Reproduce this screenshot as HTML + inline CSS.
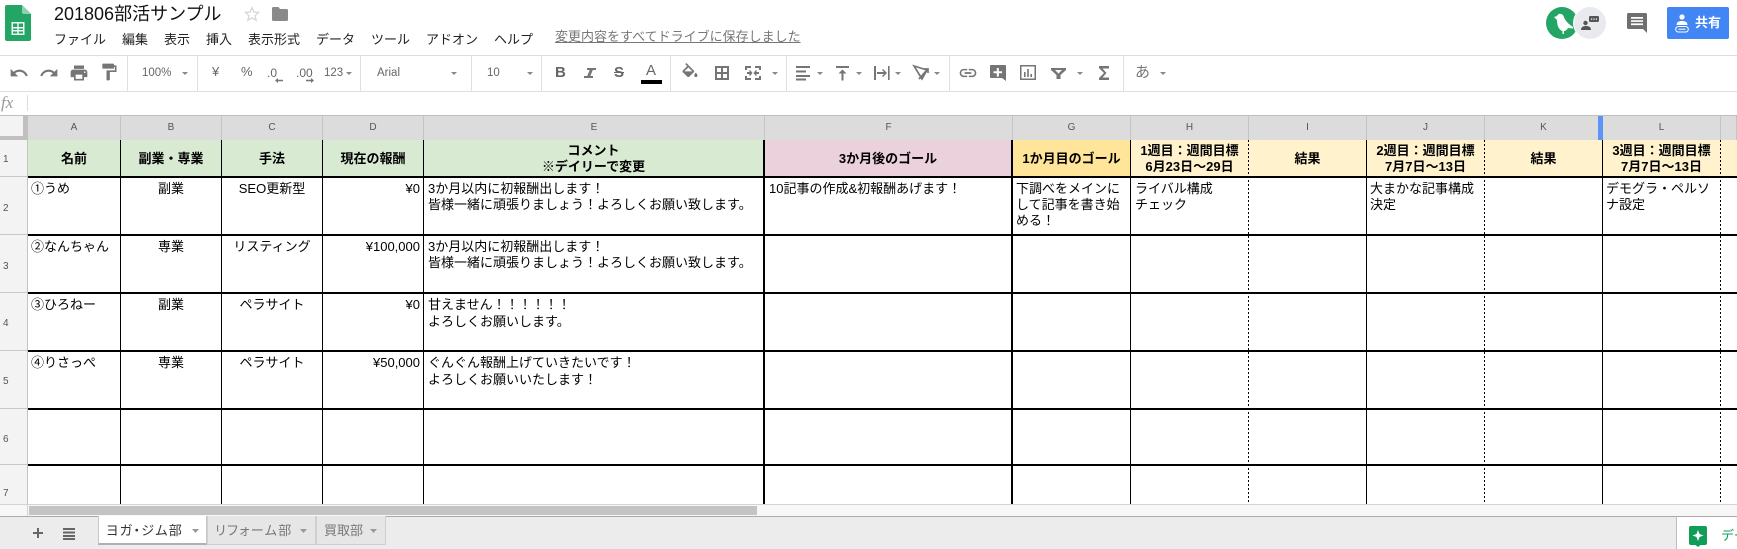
<!DOCTYPE html>
<html lang="ja"><head><meta charset="utf-8"><title>201806部活サンプル</title>
<style>
html,body{margin:0;padding:0;background:#fff}
#p{position:relative;width:1737px;height:549px;overflow:hidden;background:#fff;font-family:"Liberation Sans","Noto Sans CJK JP",sans-serif;font-size:13px;color:#000}
#p div{position:absolute}
.t{white-space:nowrap;line-height:16px;height:16px}
.c{text-align:center}
.r{text-align:right}
.b{font-weight:bold}
.n{font-feature-settings:"palt"}
.h{height:24px;top:116px;line-height:23px;font-size:10px;color:#555;text-align:center;background:#dcdcdc;border-right:1px solid #c4c4c4;box-sizing:border-box}
.rn{left:0;width:27px;background:#f3f3f3;border-bottom:1px solid #c8c8c8;box-sizing:border-box;font-size:10px;color:#555;padding-left:3px}
.v{top:140px;height:364px;width:1px;background:#000}
.vt{width:2px}
.d{background:repeating-linear-gradient(#000 0 2px,transparent 2px 4px)}
.l{left:28px;width:1709px;height:2px;background:#000}
.s{top:56px;width:1px;height:35px;background:#e0e0e0}
.m{top:32px;color:#222}
.g{color:#757575}
.tb{font-size:11.5px;color:#666;top:65px}
</style></head><body><div id="p">

<svg style="position:absolute;left:5px;top:5px" width="26" height="36" viewBox="0 0 26 36"><path d="M2 0H17L26 9V34a2 2 0 0 1-2 2H2a2 2 0 0 1-2-2V2a2 2 0 0 1 2-2z" fill="#23a566"/><path d="M17 0L26 9H19a2 2 0 0 1-2-2z" fill="#8ed1b1"/><path d="M6.500 17H19.500V30H6.500zM8 18.500V22H12.300V18.500zM13.700 18.500V22H18V18.500zM8 23.500V25H12.300V23.500zM13.700 23.500V25H18V23.500zM8 26.500V28.500H12.300V26.500zM13.700 26.500V28.500H18V26.500z" fill="#f1f8f4" fill-rule="evenodd"/></svg>

<div class="t" style="left:54px;top:2px;font-size:18px;line-height:24px;height:24px;color:#111">201806部活サンプル</div>
<svg style="position:absolute;left:244px;top:6px" width="16" height="16" viewBox="0 0 16 16"><path d="M8 1.500l1.900 4.500 4.800.4-3.600 3.200 1.100 4.700L8 11.800l-4.200 2.500 1.100-4.700L1.300 6.400 6.100 6z" fill="none" stroke="#d5d5d5" stroke-width="1.200"/></svg>
<svg style="position:absolute;left:272px;top:7px" width="16" height="14" viewBox="0 0 16 14"><path d="M1.500 0H6.500L8 2H14.500A1.500 1.500 0 0 1 16 3.500V12.500A1.500 1.500 0 0 1 14.500 14H1.500A1.500 1.500 0 0 1 0 12.500V1.500A1.500 1.500 0 0 1 1.500 0z" fill="#8a8a8a"/></svg>

<div class="t m" style="left:54px">ファイル</div>
<div class="t m" style="left:122px">編集</div>
<div class="t m" style="left:164px">表示</div>
<div class="t m" style="left:206px">挿入</div>
<div class="t m" style="left:248px">表示形式</div>
<div class="t m" style="left:316px">データ</div>
<div class="t m" style="left:371px">ツール</div>
<div class="t m" style="left:426px">アドオン</div>
<div class="t m" style="left:494px">ヘルプ</div>
<div class="t" style="left:555px;top:29px;color:#777;text-decoration:underline">変更内容をすべてドライブに保存しました</div>

<svg style="position:absolute;left:1546px;top:7px" width="62" height="33" viewBox="0 0 62 33"><circle cx="16" cy="16" r="16" fill="#23a566"/><path d="M8 10L11 9C12 6 16 6 17.500 9C19 13 21 16 27 20L27 21.500L22 21C21 23 19 24 18 24L18 27L16.500 27L16.500 24C13 23 11 19 11 13Z" fill="#fff"/><circle cx="44" cy="16" r="17" fill="#fff"/><circle cx="44" cy="16" r="16" fill="#e9eaed"/><circle cx="39.500" cy="16" r="2.200" fill="#555"/><path d="M35 23c0-3 2-4 5-4s5 1 5 4z" fill="#555"/><rect x="43" y="9" width="10" height="6" rx="1.200" fill="#555"/><path d="M45 11.500h1.200v1.200H45zM47.400 11.500h1.200v1.200h-1.200zM49.800 11.500H51v1.200h-1.200z" fill="#fff"/></svg>
<svg style="position:absolute;left:1627px;top:13px" width="20" height="20" viewBox="0 0 20 20"><path d="M1.500 0h17A1.500 1.500 0 0 1 20 1.500V20l-4-4H1.500A1.500 1.500 0 0 1 0 14.500V1.500A1.500 1.500 0 0 1 1.500 0z" fill="#6f6f6f"/><path d="M4 4h12v1.700H4zM4 7.200h12v1.700H4zM4 10.400h12v1.700H4z" fill="#fff"/></svg>
<div style="left:1667px;top:7px;width:62px;height:32px;background:#4285f4;border-radius:2px"></div>
<svg style="position:absolute;left:1675px;top:14px" width="14" height="19" viewBox="0 0 14 19"><circle cx="7" cy="3" r="2.600" fill="#fff"/><path d="M1.500 11c0-3 2.500-4 5.500-4s5.500 1 5.500 4z" fill="#fff"/><rect x=".7" y="12.500" width="12.600" height="5.500" rx="2.700" fill="none" stroke="#fff"/><path d="M3.500 15.200h7" stroke="#fff"/></svg>
<div class="t b" style="left:1695px;top:15px;color:#fff">共有</div>

<div style="left:0;top:55px;width:1737px;height:1px;background:#dedede"></div>
<div style="left:0;top:91px;width:1737px;height:1px;background:#dedede"></div>
<div class="s" style="left:127px"></div><div class="s" style="left:197px"></div><div class="s" style="left:360px"></div><div class="s" style="left:471px"></div><div class="s" style="left:541px"></div><div class="s" style="left:670px"></div><div class="s" style="left:786px"></div><div class="s" style="left:949px"></div><div class="s" style="left:1123px"></div>

<svg style="position:absolute;left:0;top:56px" width="1200" height="36" fill="#757575">
<svg x="9" y="7" width="20" height="20" viewBox="0 0 24 24"><path d="M12.500 8c-2.650 0-5.050.99-6.900 2.600L2 7v9h9l-3.620-3.620c1.390-1.160 3.160-1.880 5.120-1.880 3.540 0 6.550 2.310 7.600 5.500l2.370-.78C21.080 11.030 17.150 8 12.500 8z"/></svg>
<svg x="39" y="7" width="20" height="20" viewBox="0 0 24 24"><path d="M18.400 10.600C16.550 8.990 14.150 8 11.500 8c-4.650 0-8.580 3.030-9.960 7.220L3.900 16c1.050-3.190 4.050-5.500 7.600-5.500 1.950 0 3.730.72 5.120 1.880L13 16h9V7l-3.600 3.600z"/></svg>
<svg x="69" y="7" width="20" height="20" viewBox="0 0 24 24"><path d="M19 8H5c-1.660 0-3 1.340-3 3v6h4v4h12v-4h4v-6c0-1.660-1.340-3-3-3zm-3 11H8v-5h8v5zm3-7c-.55 0-1-.45-1-1s.45-1 1-1 1 .45 1 1-.45 1-1 1zm-1-9H6v4h12V3z"/></svg>
<svg x="99" y="6" width="20" height="20" viewBox="0 0 24 24"><path d="M18 4V3c0-.55-.45-1-1-1H5c-.55 0-1 .45-1 1v4c0 .55.45 1 1 1h12c.55 0 1-.45 1-1V6h1v4H9v11c0 .55.45 1 1 1h2c.55 0 1-.45 1-1v-9h8V4h-3z"/></svg>
<g fill="#888"><path d="M182 16h6l-3 3zM346 16h6l-3 3zM451 16h6l-3 3zM527 16h6l-3 3zM772 16h6l-3 3zM817 16h6l-3 3zM856 16h6l-3 3zM895 16h6l-3 3zM934 16h6l-3 3zM1077 16h6l-3 3zM1160 16h6l-3 3z"/></g>
<path d="M278 27l-3-2.500 3-2.500v1.700h5v1.600h-5zM311 22l3 2.500-3 2.500v-1.700h-5v-1.600h5z"/>
<path d="M587 12h9v2h-3.200l-2.500 6h2.700v2h-9v-2h3.200l2.500-6H587z"/>
<svg x="680" y="7" width="20" height="20" viewBox="0 0 24 24"><path d="M16.560 8.940L7.620 0 6.210 1.410l2.380 2.380-5.150 5.150c-.59.59-.59 1.540 0 2.120l5.500 5.500c.29.29.68.44 1.060.44s.77-.15 1.060-.44l5.500-5.500c.59-.58.59-1.530 0-2.120zM5.210 10L10 5.210 14.790 10H5.210zM19 11.500s-2 2.170-2 3.500c0 1.100.9 2 2 2s2-.9 2-2c0-1.330-2-3.500-2-3.500z"/></svg>
<path d="M715 10h14v14h-14zM717 12v4h4v-4zM723 12v4h4v-4zM717 18v4h4v-4zM723 18v4h4v-4z" fill-rule="evenodd"/>
<path d="M745 10h6v2h-4v2h-2zM755 10h6v4h-2v-2h-4zM745 20h2v2h4v2h-6zM759 20h2v4h-6v-2h4zM747 16h3l-1-1 1-1 2.500 3-2.500 3-1-1 1-1h-3zM759 16v2h-3l1 1-1 1-2.500-3 2.500-3 1 1-1 1z"/>
<path d="M796 10h14v2h-14zM796 14.500h10v2h-10zM796 19h14v2h-14zM796 22.500h10v2h-10z"/>
<path d="M836 10h13v2h-13zM842.500 13.500l4 4h-3v7h-2v-7h-3z"/>
<path d="M874 10h2v14h-2zM888 10h1.600v14H888zM877 16h7l-2-2 1-1 4 4-4 4-1-1 2-2h-7z"/>
<path d="M914 10l13 4-5 9z" fill="none" stroke="#757575" stroke-width="1.700"/><path d="M919 23l8-9M924 13h4v4" fill="none" stroke="#757575" stroke-width="1.700"/>
<svg x="958" y="7" width="20" height="20" viewBox="0 0 24 24"><path d="M3.900 12c0-1.710 1.390-3.100 3.100-3.100h4V7H7c-2.760 0-5 2.240-5 5s2.240 5 5 5h4v-1.900H7c-1.710 0-3.100-1.390-3.100-3.100zM8 13h8v-2H8v2zm9-6h-4v1.900h4c1.710 0 3.100 1.390 3.100 3.100s-1.390 3.100-3.100 3.100h-4V17h4c2.760 0 5-2.240 5-5s-2.240-5-5-5z"/></svg>
<path d="M991 9h14a1 1 0 0 1 1 1v15l-4-3h-11a1 1 0 0 1-1-1V10a1 1 0 0 1 1-1zM996.800 12v3.300h-3.300v2h3.300v3.300h2v-3.300h3.300v-2h-3.300V12z" fill-rule="evenodd"/>
<path d="M1020 9h16v15h-16zM1021.500 10.500v12h13v-12zM1024 16h1.600v5H1024zM1027.200 13h1.600v8h-1.600zM1030.400 18h1.600v3h-1.600z" fill-rule="evenodd"/>
<path d="M1051 12h15v2l-5.500 5v4h-4v-4l-5.500-5zm4 2l3.500 3.500 3.500-3.500z" fill-rule="evenodd"/>
<path d="M1099 10h10v2.500h-6.500l4 4.500-4 4.500h6.500V24h-10v-2l5-5-5-5z"/>
</svg>

<div class="t tb" style="left:142px;width:34px">100%</div>
<div class="t tb" style="left:212px;top:64px;font-size:13px">¥</div>
<div class="t tb" style="left:241px;top:64px;font-size:13px">%</div>
<div class="t tb" style="left:267px;top:65px;font-size:12px">.0</div>
<div class="t tb" style="left:296px;top:65px;font-size:12px">.00</div>
<div class="t tb" style="left:324px">123</div>
<div class="t tb" style="left:377px">Arial</div>
<div class="t tb" style="left:487px">10</div>
<div class="t tb g" style="left:555px;top:65px;font-size:15px;font-weight:bold">B</div>
<div class="t tb g" style="left:614px;top:65px;font-size:15px;font-weight:bold;text-decoration:line-through">S</div>
<div class="t tb g" style="left:646px;top:63px;font-size:15px">A</div>
<div style="left:641px;top:80px;width:21px;height:4px;background:#000"></div>
<div class="t g" style="left:1135px;top:65px;font-size:15px">あ</div>

<div class="t" style="left:1px;top:95px;font-family:'Liberation Serif',serif;font-style:italic;font-size:17px;color:#999">fx</div>
<div style="left:27px;top:95px;width:1px;height:16px;background:#ddd"></div>
<div style="left:0;top:115px;width:1737px;height:1px;background:#bdbdbd"></div>

<div style="left:0;top:116px;width:23px;height:24px;background:#f3f3f3"></div>
<div style="left:23px;top:116px;width:5px;height:28px;background:#c0c0c0"></div>
<div style="left:0;top:136px;width:28px;height:4px;background:#c0c0c0"></div>

<div class="h" style="left:28px;width:93px">A</div>
<div class="h" style="left:121px;width:101px">B</div>
<div class="h" style="left:222px;width:101px">C</div>
<div class="h" style="left:323px;width:101px">D</div>
<div class="h" style="left:424px;width:341px">E</div>
<div class="h" style="left:765px;width:248px">F</div>
<div class="h" style="left:1013px;width:118px">G</div>
<div class="h" style="left:1131px;width:118px">H</div>
<div class="h" style="left:1249px;width:118px">I</div>
<div class="h" style="left:1367px;width:118px">J</div>
<div class="h" style="left:1485px;width:118px">K</div>
<div class="h" style="left:1603px;width:118px">L</div>
<div class="h" style="left:1721px;width:16px"></div>
<div style="left:1598px;top:116px;width:5px;height:24px;background:#5a95f5"></div>

<div class="rn" style="top:140px;height:37px;line-height:40px">1</div>
<div class="rn" style="top:177px;height:58px;line-height:64px">2</div>
<div class="rn" style="top:235px;height:58px;line-height:64px">3</div>
<div class="rn" style="top:293px;height:58px;line-height:62px">4</div>
<div class="rn" style="top:351px;height:58px;line-height:62px">5</div>
<div class="rn" style="top:409px;height:56px;line-height:62px">6</div>
<div class="rn" style="top:465px;height:39px;line-height:58px;border:0">7</div>
<div style="left:27px;top:140px;width:1px;height:364px;background:#c4c4c4"></div>

<div style="left:28px;top:140px;width:735px;height:36px;background:#d9ead3"></div>
<div style="left:764px;top:140px;width:248px;height:36px;background:#ead1dc"></div>
<div style="left:1012px;top:140px;width:118px;height:36px;background:#ffe599"></div>
<div style="left:1130px;top:140px;width:607px;height:36px;background:#fff2cc"></div>

<div class="v" style="left:120px"></div><div class="v" style="left:221px"></div><div class="v" style="left:322px"></div><div class="v" style="left:423px"></div>
<div class="v vt" style="left:763px"></div><div class="v vt" style="left:1011px"></div>
<div class="v" style="left:1130px"></div><div class="v d" style="left:1248px"></div><div class="v" style="left:1366px"></div><div class="v d" style="left:1484px"></div><div class="v" style="left:1602px"></div><div class="v d" style="left:1720px"></div>
<div class="l" style="top:176px"></div><div class="l" style="top:234px"></div><div class="l" style="top:292px"></div><div class="l" style="top:350px"></div><div class="l" style="top:408px"></div><div class="l" style="top:464px"></div>

<div class="t c b" style="left:28px;width:92px;top:151px">名前</div>
<div class="t c b" style="left:121px;width:100px;top:151px">副業・専業</div>
<div class="t c b" style="left:222px;width:100px;top:151px">手法</div>
<div class="t c b" style="left:323px;width:100px;top:151px">現在の報酬</div>
<div class="t c b" style="left:424px;width:339px;top:143px">コメント</div>
<div class="t c b" style="left:424px;width:339px;top:159px">※デイリーで変更</div>
<div class="t c b" style="left:765px;width:246px;top:151px">3か月後のゴール</div>
<div class="t c b" style="left:1013px;width:117px;top:151px">1か月目のゴール</div>
<div class="t c b" style="left:1131px;width:117px;top:143px">1週目：週間目標</div>
<div class="t c b" style="left:1131px;width:117px;top:159px">6月23日～29日</div>
<div class="t c b" style="left:1249px;width:117px;top:151px">結果</div>
<div class="t c b" style="left:1367px;width:117px;top:143px">2週目：週間目標</div>
<div class="t c b" style="left:1367px;width:117px;top:159px">7月7日～13日</div>
<div class="t c b" style="left:1485px;width:117px;top:151px">結果</div>
<div class="t c b" style="left:1603px;width:117px;top:143px">3週目：週間目標</div>
<div class="t c b" style="left:1603px;width:117px;top:159px">7月7日～13日</div>

<div class="t" style="left:31px;top:181px">①うめ</div>
<div class="t c" style="left:121px;width:100px;top:181px">副業</div>
<div class="t c" style="left:222px;width:100px;top:181px">SEO更新型</div>
<div class="t r" style="left:323px;width:97px;top:181px">¥0</div>
<div class="t" style="left:428px;top:181px">3か月以内に初報酬出します！</div>
<div class="t" style="left:428px;top:197px">皆様一緒に頑張りましょう！よろしくお願い致します。</div>
<div class="t" style="left:769px;top:181px">10記事の作成&amp;初報酬あげます！</div>
<div class="t" style="left:1016px;top:181px">下調べをメインに</div>
<div class="t" style="left:1016px;top:197px">して記事を書き始</div>
<div class="t" style="left:1016px;top:213px">める！</div>
<div class="t" style="left:1135px;top:181px">ライバル構成</div>
<div class="t" style="left:1135px;top:197px">チェック</div>
<div class="t" style="left:1370px;top:181px">大まかな記事構成</div>
<div class="t" style="left:1370px;top:197px">決定</div>
<div class="t" style="left:1606px;top:181px">デモグラ・ペルソ</div>
<div class="t" style="left:1606px;top:197px">ナ設定</div>

<div class="t" style="left:31px;top:239px">②なんちゃん</div>
<div class="t c" style="left:121px;width:100px;top:239px">専業</div>
<div class="t c" style="left:222px;width:100px;top:239px">リスティング</div>
<div class="t r" style="left:323px;width:97px;top:239px">¥100,000</div>
<div class="t" style="left:428px;top:239px">3か月以内に初報酬出します！</div>
<div class="t" style="left:428px;top:255px">皆様一緒に頑張りましょう！よろしくお願い致します。</div>

<div class="t" style="left:31px;top:297px">③ひろねー</div>
<div class="t c" style="left:121px;width:100px;top:297px">副業</div>
<div class="t c" style="left:222px;width:100px;top:297px">ペラサイト</div>
<div class="t r" style="left:323px;width:97px;top:297px">¥0</div>
<div class="t" style="left:428px;top:297px">甘えません！！！！！！</div>
<div class="t" style="left:428px;top:314px">よろしくお願いします。</div>

<div class="t" style="left:31px;top:355px">④りさっぺ</div>
<div class="t c" style="left:121px;width:100px;top:355px">専業</div>
<div class="t c" style="left:222px;width:100px;top:355px">ペラサイト</div>
<div class="t r" style="left:323px;width:97px;top:355px">¥50,000</div>
<div class="t" style="left:428px;top:355px">ぐんぐん報酬上げていきたいです！</div>
<div class="t" style="left:428px;top:372px">よろしくお願いいたします！</div>

<div style="left:0;top:504px;width:1737px;height:12px;background:#f7f7f7;border-top:1px solid #d4d4d4;box-sizing:border-box"></div>
<div style="left:27px;top:504px;width:1px;height:12px;background:#d4d4d4"></div>
<div style="left:29px;top:506px;width:728px;height:9px;background:#c4c4c4"></div>
<div style="left:0;top:516px;width:1737px;height:33px;background:#ececec;border-top:1px solid #aaa;box-sizing:border-box"></div>

<svg style="position:absolute;left:30px;top:525px" width="50" height="16" fill="#666"><path d="M3 7h10v2H3zM7 3h2v10H7z"/><path d="M33 3h12v2H33zM33 6.500h12v2H33zM33 10h12v2H33zM33 13h12v2H33z"/></svg>

<div style="left:98px;top:516px;width:109px;height:29px;background:#fff;border:1px solid #c8c8c8;border-top:0;border-bottom:2px solid #b0b0b0;box-sizing:border-box"></div>
<div style="left:207px;top:516px;width:109px;height:29px;background:#e6e6e6;border:1px solid #cfcfcf;border-top:0;box-sizing:border-box"></div>
<div style="left:316px;top:516px;width:70px;height:29px;background:#e6e6e6;border:1px solid #cfcfcf;border-top:0;box-sizing:border-box"></div>
<div class="t n" style="left:106px;top:523px;color:#333;letter-spacing:1.300px">ヨガ・ジム部</div>
<div class="t n" style="left:215px;top:523px;color:#777;letter-spacing:1.400px">リフォーム部</div>
<div class="t" style="left:324px;top:523px;color:#777">買取部</div>
<svg style="position:absolute;left:190px;top:528px" width="190" height="8" fill="#999"><path d="M2 1h7L5.500 5zM110 1h7l-3.500 4zM180 1h7l-3.500 4z"/></svg>

<div style="left:1676px;top:517px;width:61px;height:32px;background:#fff;border-left:1px solid #bdbdbd;box-sizing:border-box"></div>
<svg style="position:absolute;left:1689px;top:526px" width="18" height="21" viewBox="0 0 18 21"><path d="M2 0h14a2 2 0 0 1 2 2v15a2 2 0 0 1-2 2h-4.500L9 21l-2.500-2H2a2 2 0 0 1-2-2V2a2 2 0 0 1 2-2z" fill="#0f9d58"/><path d="M9 4l1.500 4L14.500 9.500 10.500 11 9 15 7.500 11 3.500 9.500 7.500 8z" fill="#fff"/></svg>
<div class="t" style="left:1721px;top:528px;color:#0f9d58">データ</div>

</div></body></html>
